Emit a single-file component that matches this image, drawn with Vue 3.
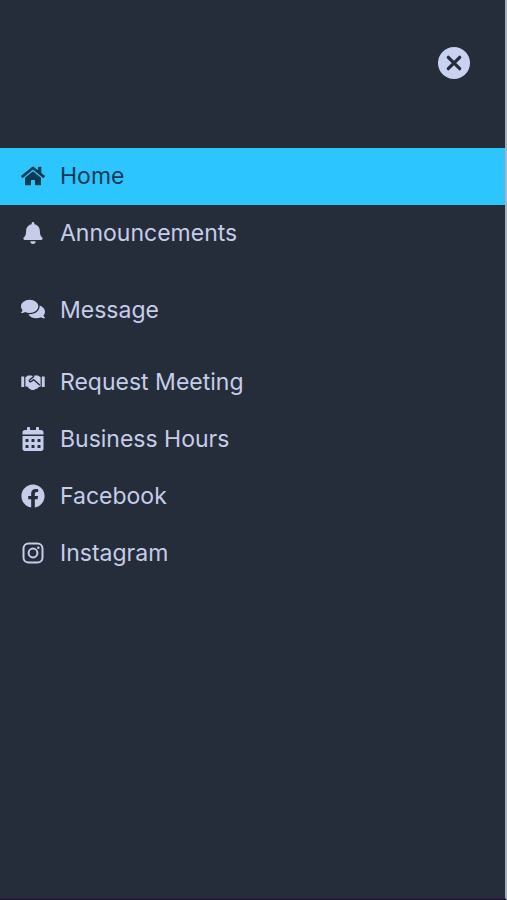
<script setup>
import { ref } from 'vue'

const active = ref('Home')

const items = [
  {
    label: 'Home',
    box: '0 0 576 512',
    size: 'wide',
    path: 'M280.37 148.26L96 300.11V464a16 16 0 0 0 16 16l112.06-.29a16 16 0 0 0 15.92-16V368a16 16 0 0 1 16-16h64a16 16 0 0 1 16 16v95.64a16 16 0 0 0 16 16.05L464 480a16 16 0 0 0 16-16V300L295.67 148.26a12.19 12.19 0 0 0-15.3 0zM571.6 251.47L488 182.56V44.05a12 12 0 0 0-12-12h-56a12 12 0 0 0-12 12v72.61L318.47 43a48 48 0 0 0-61 0L4.34 251.47a12 12 0 0 0-1.6 16.9l25.5 31A12 12 0 0 0 45.15 301l235.22-193.74a12.19 12.19 0 0 1 15.3 0L530.9 301a12 12 0 0 0 16.9-1.6l25.5-31a12 12 0 0 0-1.7-16.93z'
  },
  {
    label: 'Announcements',
    box: '0 0 448 512',
    size: 'small',
    path: 'M224 512c35.32 0 63.97-28.65 63.97-64H160.03c0 35.35 28.65 64 63.97 64zm215.39-149.71c-19.32-20.76-55.47-51.99-55.47-154.29 0-77.7-54.48-139.9-127.94-155.16V32c0-17.67-14.32-32-31.98-32s-31.98 14.33-31.98 32v20.84C118.56 68.1 64.08 130.3 64.08 208c0 102.3-36.15 133.53-55.47 154.29-6 6.45-8.66 14.16-8.61 21.71.11 16.4 12.98 32 32.1 32h383.8c19.12 0 32-15.6 32.1-32 .05-7.55-2.61-15.27-8.61-21.71z'
  },
  {
    label: 'Message',
    box: '0 0 576 512',
    size: 'wide',
    tall: true,
    path: 'M416 192c0-88.4-93.1-160-208-160S0 103.6 0 192c0 34.3 14.1 65.9 38 92-13.4 30.2-35.5 54.2-35.8 54.5-2.2 2.3-2.8 5.7-1.5 8.7S4.8 352 8 352c36.6 0 66.9-12.3 88.7-25 32.2 15.7 70.3 25 111.3 25 114.9 0 208-71.6 208-160zm122 220c23.9-26 38-57.7 38-92 0-66.9-53.5-124.2-129.3-148.1.9 6.6 1.3 13.3 1.3 20.1 0 105.9-107.7 192-240 192-10.8 0-21.3-.8-31.7-1.9C207.8 439.6 281.8 480 368 480c41 0 79.1-9.2 111.3-25 21.8 12.7 52.1 25 88.7 25 3.2 0 6.1-1.9 7.3-4.8 1.3-2.9.7-6.3-1.5-8.7-.3-.3-22.4-24.2-35.8-54.5z'
  },
  { label: 'Request Meeting', box: '0 0 24 24', size: 'wide', shape: 'handshake' },
  {
    label: 'Business Hours',
    box: '0 0 448 512',
    size: 'wide',
    path: 'M0 464c0 26.5 21.5 48 48 48h352c26.5 0 48-21.5 48-48V192H0v272zm320-196c0-6.6 5.4-12 12-12h40c6.6 0 12 5.4 12 12v40c0 6.6-5.4 12-12 12h-40c-6.6 0-12-5.4-12-12v-40zm0 128c0-6.6 5.4-12 12-12h40c6.6 0 12 5.4 12 12v40c0 6.6-5.4 12-12 12h-40c-6.6 0-12-5.4-12-12v-40zM192 268c0-6.6 5.4-12 12-12h40c6.6 0 12 5.4 12 12v40c0 6.6-5.4 12-12 12h-40c-6.6 0-12-5.4-12-12v-40zm0 128c0-6.6 5.4-12 12-12h40c6.6 0 12 5.4 12 12v40c0 6.6-5.4 12-12 12h-40c-6.6 0-12-5.4-12-12v-40zM64 268c0-6.6 5.4-12 12-12h40c6.6 0 12 5.4 12 12v40c0 6.6-5.4 12-12 12H76c-6.6 0-12-5.4-12-12v-40zm0 128c0-6.6 5.4-12 12-12h40c6.6 0 12 5.4 12 12v40c0 6.6-5.4 12-12 12H76c-6.6 0-12-5.4-12-12v-40zM400 64h-48V16c0-8.8-7.2-16-16-16h-32c-8.8 0-16 7.2-16 16v48H160V16c0-8.8-7.2-16-16-16h-32c-8.8 0-16 7.2-16 16v48H48C21.5 64 0 85.5 0 112v48h448v-48c0-26.5-21.5-48-48-48z'
  },
  {
    label: 'Facebook',
    box: '0 0 512 512',
    size: 'wide',
    path: 'M504 256C504 119 393 8 256 8S8 119 8 256c0 123.78 90.69 226.38 209.25 245V327.69h-63V256h63v-54.64c0-62.15 37-96.48 93.67-96.48 27.14 0 55.52 4.84 55.52 4.84v61h-31.28c-30.8 0-40.41 19.12-40.41 38.73V256h68.78l-11 71.69h-57.78V501C413.31 482.38 504 379.78 504 256z'
  },
  { label: 'Instagram', box: '0 0 24 24', size: 'wide', shape: 'instagram' }
]
</script>

<template>
  <aside class="drawer">
    <header class="top">
      <button class="close" type="button" aria-label="Close menu">
        <svg viewBox="0 0 32 32" aria-hidden="true">
          <circle cx="16" cy="16" r="16" fill="currentColor" />
          <path class="cross" d="M10.3 10.3l11.4 11.4M21.7 10.3L10.3 21.7" />
        </svg>
      </button>
    </header>
    <nav>
      <ul class="menu">
        <li v-for="item in items" :key="item.label">
          <a
            href="#"
            class="link"
            :class="{ active: active === item.label, tall: item.tall }"
            @click.prevent="active = item.label"
          >
            <span class="icon">
              <svg :class="item.size" :viewBox="item.box" aria-hidden="true">
                <path v-if="item.path" :d="item.path" fill="currentColor" />
                <g v-else-if="item.shape === 'handshake'">
                  <path
                    fill="currentColor"
                    d="M.3 6.6h2.9v10.3H.3zM20.8 6.6h2.9v10.3h-2.9zM4.4 7.2L7 5.6h3.2l1.8.7 1.8-.7H17l2.6 1.6v9.2l-1.8.6-1.4 1.6-1.8.4-1.5 1.1h-2.4l-2-1.1-2.6-2.4H4.4z"
                  />
                  <path class="clasp" d="M12.6 6.6L8.6 10c-.8 1 .4 2.2 1.6 1.5l2.6-1.8 5.6 5" />
                </g>
                <g v-else fill="none" stroke="currentColor" stroke-width="2">
                  <rect x="2.5" y="2.5" width="19" height="19" rx="5" />
                  <circle cx="12" cy="12" r="4.4" />
                  <circle cx="17.3" cy="6.7" r="1.3" fill="currentColor" stroke="none" />
                </g>
              </svg>
            </span>
            <span class="label">{{ item.label }}</span>
          </a>
        </li>
      </ul>
    </nav>
  </aside>
</template>

<style>
body {
  margin: 0;
  background: #252c3a;
}
</style>

<style scoped>
.drawer {
  box-sizing: border-box;
  min-height: 100vh;
  background: #252c3a;
  border-right: 2px solid #a9b0bf;
  border-bottom: 2px solid #241b37;
  color: #c5cde8;
  font-family: Inter, "Liberation Sans", sans-serif;
}

.top {
  display: flex;
  justify-content: flex-end;
  padding: 47px 35px 69px;
}

.close {
  width: 32px;
  height: 32px;
  padding: 0;
  border: 0;
  border-radius: 50%;
  background: none;
  color: #c9d2f0;
  cursor: pointer;
}

.close svg {
  display: block;
  width: 100%;
  height: 100%;
}

.cross {
  fill: none;
  stroke: #252c3a;
  stroke-width: 3.2;
  stroke-linecap: round;
}

.clasp {
  fill: none;
  stroke: #252c3a;
  stroke-width: 1.4;
  stroke-linecap: round;
  stroke-linejoin: round;
}

.menu {
  margin: 0;
  padding: 0;
  list-style: none;
}

.link {
  display: flex;
  align-items: center;
  gap: 15px;
  padding: 14px 21px;
  color: inherit;
  font-size: 23px;
  line-height: 29px;
  text-decoration: none;
}

.link.active {
  background: #2dc5ff;
  color: #0b3b52;
}

.link.tall {
  padding-top: 34px;
  padding-bottom: 29px;
}

.icon {
  display: flex;
  justify-content: center;
  flex: none;
  width: 24px;
  padding-bottom: 2px;
}

.tall .icon {
  padding-bottom: 4px;
}

.wide {
  width: 24px;
  height: 24px;
}

.small {
  width: 20px;
  height: 22px;
}
</style>
